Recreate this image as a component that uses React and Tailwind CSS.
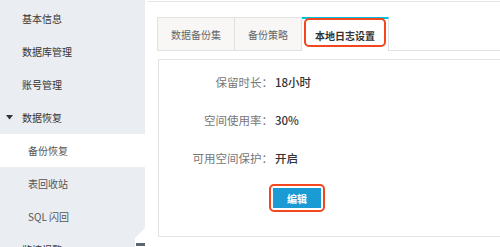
import React from 'react';

const FONT = { fontFamily: '"Noto Sans CJK SC", "Liberation Sans", sans-serif' };

const menu = [
  { label: '基本信息', level: 0 },
  { label: '数据库管理', level: 0 },
  { label: '账号管理', level: 0 },
  { label: '数据恢复', level: 0, open: true },
  { label: '备份恢复', level: 1, active: true },
  { label: '表回收站', level: 1 },
  { label: 'SQL 闪回', level: 1 },
  { label: '监控报警', level: 0 },
];

const rows = [
  { label: '保留时长：', value: '18小时' },
  { label: '空间使用率：', value: '30%' },
  { label: '可用空间保护：', value: '开启' },
];

const Sidebar = () => (
  <div className="relative w-[145px] shrink-0 bg-[#eaedf1] pt-[2px]">
    {menu.map((item) => (
      <div
        key={item.label}
        className={`relative flex h-[33px] items-center text-[10px] ${
          item.active ? 'bg-white' : ''
        } ${item.level === 1 ? 'pl-[28px] text-[#555]' : 'pl-[22px] text-[#333]'}`}
      >
        {item.open && (
          <svg className="absolute left-[6px] top-[14px]" width="7" height="5" viewBox="0 0 7 5">
            <path d="M0 0h7L3.5 4.5z" fill="#333" />
          </svg>
        )}
        {item.label}
      </div>
    ))}
    {/* collapse handle on the sidebar edge */}
    <svg className="absolute right-0 top-[228px]" width="11" height="19" viewBox="0 0 11 19">
      <path d="M11 0L1 10V19H11z" fill="#fff" />
      <rect x="2" y="15" width="9" height="3" fill="#5b6470" />
    </svg>
  </div>
);

const Tabs = () => (
  <div className="ml-[12px] mt-[15px] flex h-[34px]">
    <div className="flex w-[78px] items-center justify-center border border-[#e1e1e1] bg-[#f8f7f6] text-[10px] text-[#666]">
      数据备份集
    </div>
    <div className="flex w-[67px] items-center justify-center border-y border-r border-[#e1e1e1] bg-[#f8f7f6] text-[10px] text-[#666]">
      备份策略
    </div>
    <div className="relative flex w-[87px] items-center justify-center border-r border-t-2 border-r-[#e1e1e1] border-t-[#00c1de] bg-white text-[10px] font-bold text-[#333]">
      本地日志设置
      <div className="absolute left-[2px] right-[2px] top-[-1px] h-[29px] rounded-[5px] border-2 border-[#f2461f]" />
    </div>
    <div className="flex-1 border-b border-[#e1e1e1]" />
  </div>
);

const Settings = () => (
  <div className="ml-[13px] mt-[8px] h-[178px] border border-r-0 border-[#e3e3e3] pt-[4px]">
    {rows.map((r) => (
      <div key={r.label} className="flex h-[38px] items-center text-[11.5px]">
        <div className="w-[114px] text-right text-[#777]">{r.label}</div>
        <div className="pl-[2px] font-medium text-[#333]">{r.value}</div>
      </div>
    ))}
    <div className="ml-[110px] mt-[6px] inline-block rounded-[5px] border-2 border-[#f2461f] p-[2px]">
      <button className="flex h-[20px] w-[48px] items-center justify-center bg-[#1b9bd4] text-[10px] font-bold text-white">
        编辑
      </button>
    </div>
  </div>
);

export default function App() {
  return (
    <div className="flex h-[247px] w-[500px] overflow-hidden bg-white" style={FONT}>
      <Sidebar />
      <div className="flex-1">
        <div className="ml-[3px] h-[2px] border-b border-[#e5e5e5]" />
        <Tabs />
        <Settings />
      </div>
    </div>
  );
}
